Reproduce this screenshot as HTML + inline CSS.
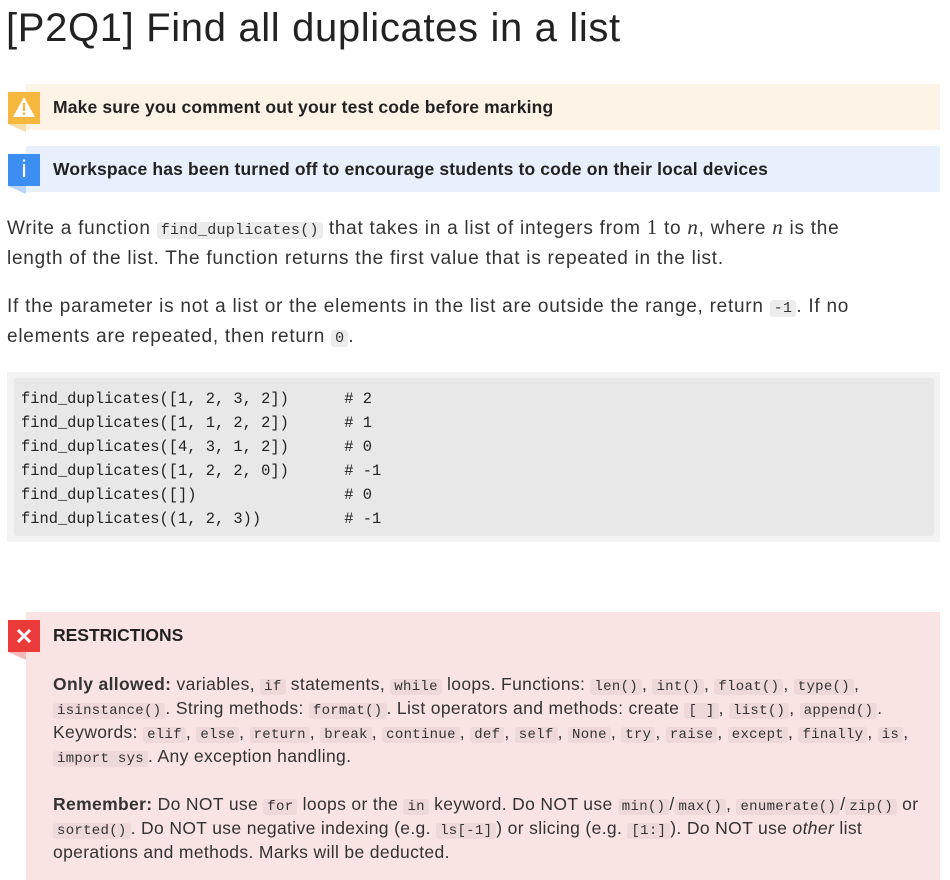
<!DOCTYPE html>
<html><head><meta charset="utf-8"><style>
body{margin:0;background:#fff;font-family:"Liberation Sans",sans-serif;color:#2d2d2d;width:950px;height:880px;overflow:hidden;position:relative}
.abs{position:absolute}
h1{position:absolute;left:6px;top:6px;margin:0;font-weight:normal;font-size:40px;color:#222;letter-spacing:0.65px}
.call{position:absolute;left:26px;width:914px;height:46px}
.call .t{position:absolute;left:27px;top:13px;font-weight:bold;font-size:17.5px;color:#222;letter-spacing:0.15px}
.ico{position:absolute;left:8px;width:32px;height:32px;color:#fff;text-align:center}
.fold{position:absolute;left:8px;width:0;height:0;border-top:8px solid;border-left:18px solid transparent}
p{position:absolute;left:7px;margin:0;font-size:19px;line-height:30px;color:#333;width:920px;letter-spacing:0.75px}
code{font-family:"Liberation Mono",monospace;font-size:15px;background:#ececec;border-radius:3px;padding:0 4px;letter-spacing:0.3px;line-height:1}
.math{font-family:"Liberation Serif",serif;font-size:21px}
pre{position:absolute;left:14px;top:378px;width:920px;height:158px;margin:0;background:#e8e8e8;border-radius:3px;font-family:"Liberation Mono",monospace;font-size:15.4px;line-height:24px;padding:9px 7px;box-sizing:border-box;color:#222}
.r{font-size:17.5px;line-height:24px;color:#333;letter-spacing:0.35px}
.r code{background:#efd8d8;font-size:14px;line-height:1}
</style></head><body>
<h1>[P2Q1] Find all duplicates in a list</h1>

<div class="call" style="top:84px;background:#fdf3e6"><div class="t">Make sure you comment out your test code before marking</div></div>
<div class="fold" style="top:124px;border-top-color:#f8dca6"></div>
<div class="ico" style="top:92px;background:#f6b83f"><svg width="32" height="32" viewBox="0 0 32 32"><path d="M16 5 L27 25 H5 Z" fill="#fff"/><rect x="14.8" y="11" width="2.4" height="8" fill="#f6b83f"/><rect x="14.8" y="20.5" width="2.4" height="2.4" fill="#f6b83f"/></svg></div>

<div class="call" style="top:146px;background:#e9f0fd"><div class="t">Workspace has been turned off to encourage students to code on their local devices</div></div>
<div class="fold" style="top:186px;border-top-color:#b9d4fb"></div>
<div class="ico" style="top:154px;background:#3d8ef3;font-size:24px;line-height:32px">i</div>

<p style="top:212px">Write a function <code>find_duplicates()</code> that takes in a list of integers from <span class="math">1</span> to <span class="math"><i>n</i></span>, where <span class="math"><i>n</i></span> is the<br>length of the list. The function returns the first value that is repeated in the list.</p>
<p style="top:292px">If the parameter is not a list or the elements in the list are outside the range, return <code>-1</code>. If no elements are repeated, then return <code>0</code>.</p>

<div class="abs" style="left:7px;top:372px;width:933px;height:170px;background:#f3f3f3"></div>
<pre>find_duplicates([1, 2, 3, 2])      # 2
find_duplicates([1, 1, 2, 2])      # 1
find_duplicates([4, 3, 1, 2])      # 0
find_duplicates([1, 2, 2, 0])      # -1
find_duplicates([])                # 0
find_duplicates((1, 2, 3))         # -1</pre>

<div class="abs" style="left:26px;top:612px;width:914px;height:268px;background:#f9e3e3"></div>
<div class="fold" style="top:652px;border-top-color:#f3b8b8"></div>
<div class="ico" style="top:620px;background:#ea3a3a"><svg width="32" height="32" viewBox="0 0 32 32"><path d="M10 10 L22 22 M22 10 L10 22" stroke="#fff" stroke-width="3"/></svg></div>
<div class="abs" style="left:53px;top:625px;font-weight:bold;font-size:17.5px;color:#222">RESTRICTIONS</div>
<div class="abs r" style="left:53px;top:672px;width:870px"><b>Only allowed:</b> variables, <code>if</code> statements, <code>while</code> loops. Functions: <code>len()</code>, <code>int()</code>, <code>float()</code>, <code>type()</code>, <code>isinstance()</code>. String methods: <code>format()</code>. List operators and methods: create <code>[ ]</code>, <code>list()</code>, <code>append()</code>. Keywords: <code>elif</code>, <code>else</code>, <code>return</code>, <code>break</code>, <code>continue</code>, <code>def</code>, <code>self</code>, <code>None</code>, <code>try</code>, <code>raise</code>, <code>except</code>, <code>finally</code>, <code>is</code>, <code>import sys</code>. Any exception handling.</div>
<div class="abs r" style="left:53px;top:792px;width:870px"><b>Remember:</b> Do NOT use <code>for</code> loops or the <code>in</code> keyword. Do NOT use <code>min()</code>/<code>max()</code>, <code>enumerate()</code>/<code>zip()</code> or <code>sorted()</code>. Do NOT use negative indexing (e.g. <code>ls[-1]</code>) or slicing (e.g. <code>[1:]</code>). Do NOT use <i>other</i> list operations and methods. Marks will be deducted.</div>
</body></html>
